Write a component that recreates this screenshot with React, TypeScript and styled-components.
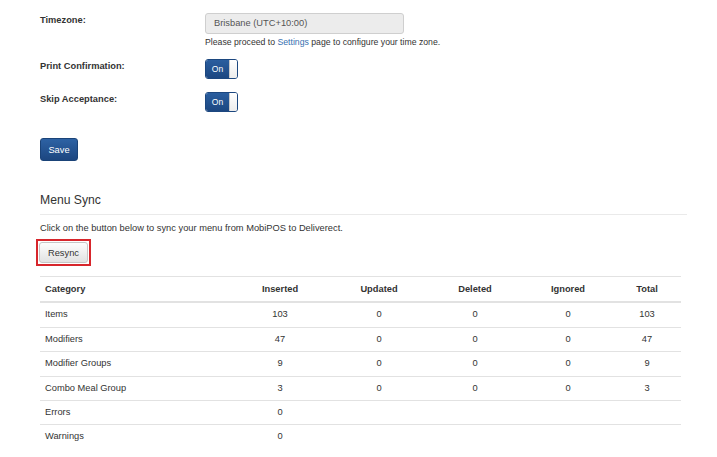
import React from "react";
import styled, { createGlobalStyle } from "styled-components";

const GlobalStyle = createGlobalStyle`
  html, body { margin: 0; padding: 0; background: #fff; }
  body {
    font-family: "Liberation Sans", Arial, Helvetica, sans-serif;
    font-size: 9.3px;
    line-height: 11.4px;
    color: #333;
  }
  * { box-sizing: border-box; }
`;

const Page = styled.div`
  width: 717px;
  padding: 13px 30px 0 40px;
`;

const FormRow = styled.div<{ $mt?: number }>`
  display: grid;
  grid-template-columns: 165px 1fr;
  align-items: start;
  margin-top: ${(p) => p.$mt ?? 0}px;
`;

const Label = styled.div<{ $pt: number }>`
  font-weight: bold;
  padding-top: ${(p) => p.$pt}px;
`;

const Control = styled.div`
  display: flex;
  flex-direction: column;
  align-items: flex-start;
`;

const ReadonlyInput = styled.div`
  width: 199px;
  height: 21px;
  background: #ececec;
  border: 1px solid #cfcfcf;
  border-radius: 3px;
  color: #555;
  padding: 0 8px;
  display: flex;
  align-items: center;
`;

const Help = styled.div`
  margin-top: 2.5px;
  color: #333;
  font-size: 8.7px;
`;

const Link = styled.a`
  color: #3570b0;
  text-decoration: none;
`;

const Toggle = styled.div`
  display: flex;
  width: 33px;
  height: 20px;
  border-radius: 3px;
  overflow: hidden;
  border: 1px solid #1c477f;
`;

const ToggleOn = styled.div`
  flex: 1;
  background: linear-gradient(#2a5e9f, #1c4781);
  color: #fff;
  display: flex;
  align-items: center;
  justify-content: center;
  font-size: 8.5px;
`;

const ToggleKnob = styled.div`
  width: 8px;
  background: linear-gradient(#ffffff, #ececec);
  border-left: 1px solid #c9c9c9;
`;

const SaveButton = styled.button`
  margin-top: 26px;
  width: 38px;
  height: 23px;
  border-radius: 3px;
  border: 1px solid #1a4378;
  background: linear-gradient(#2d62a4, #1c4680);
  color: #fff;
  font-family: inherit;
  font-size: 9.3px;
  padding: 0;
  display: block;
`;

const SectionTitle = styled.h2`
  margin: 32px 0 0;
  width: 647px;
  font-weight: normal;
  font-size: 12.2px;
  line-height: 14px;
  color: #333;
  padding-bottom: 7px;
  border-bottom: 1px solid #eaeaea;
`;

const Intro = styled.p`
  margin: 8px 0 0;
`;

const Highlight = styled.span`
  display: inline-block;
  margin: 4.5px 0 0 -4px;
  border: 2px solid #d7262c;
  padding: 1px;
`;

const GreyButton = styled.button`
  display: block;
  width: 49px;
  height: 21px;
  padding: 0;
  border-radius: 3px;
  border: 1px solid #c6c6c6;
  background: linear-gradient(#fdfdfd, #e2e2e2);
  color: #333;
  font-family: inherit;
  font-size: 9.3px;
`;

const Table = styled.table`
  margin-top: 10px;
  width: 641px;
  border-collapse: collapse;
  table-layout: fixed;
`;

const Th = styled.th<{ $left?: boolean }>`
  font-weight: bold;
  text-align: ${(p) => (p.$left ? "left" : "center")};
  padding: 6.3px 5px;
  border-top: 1px solid #e2e2e2;
  border-bottom: 2px solid #e2e2e2;
`;

const Td = styled.td<{ $left?: boolean }>`
  text-align: ${(p) => (p.$left ? "left" : "center")};
  padding: 6px 5px;
  border-top: 1px solid #e2e2e2;
`;

const columns = [
  { name: "Category", width: 189 },
  { name: "Inserted", width: 102 },
  { name: "Updated", width: 96 },
  { name: "Deleted", width: 96 },
  { name: "Ignored", width: 90 },
  { name: "Total", width: 68 },
];

const rows: (string | number)[][] = [
  ["Items", 103, 0, 0, 0, 103],
  ["Modifiers", 47, 0, 0, 0, 47],
  ["Modifier Groups", 9, 0, 0, 0, 9],
  ["Combo Meal Group", 3, 0, 0, 0, 3],
  ["Errors", 0, "", "", "", ""],
  ["Warnings", 0, "", "", "", ""],
];

const SwitchOn = () => (
  <Toggle>
    <ToggleOn>On</ToggleOn>
    <ToggleKnob />
  </Toggle>
);

export default function App() {
  return (
    <>
      <GlobalStyle />
      <Page>
        <FormRow>
          <Label $pt={1.5}>Timezone:</Label>
          <Control>
            <ReadonlyInput>Brisbane (UTC+10:00)</ReadonlyInput>
            <Help>
              Please proceed to <Link href="#">Settings</Link> page to configure your time zone.
            </Help>
          </Control>
        </FormRow>
        <FormRow $mt={11.5}>
          <Label $pt={1.5}>Print Confirmation:</Label>
          <Control>
            <SwitchOn />
          </Control>
        </FormRow>
        <FormRow $mt={13}>
          <Label $pt={1.5}>Skip Acceptance:</Label>
          <Control>
            <SwitchOn />
          </Control>
        </FormRow>
        <SaveButton>Save</SaveButton>

        <SectionTitle>Menu Sync</SectionTitle>
        <Intro>Click on the button below to sync your menu from MobiPOS to Deliverect.</Intro>
        <Highlight>
          <GreyButton>Resync</GreyButton>
        </Highlight>

        <Table>
          <colgroup>
            {columns.map((c) => (
              <col key={c.name} style={{ width: c.width }} />
            ))}
          </colgroup>
          <thead>
            <tr>
              {columns.map((c, i) => (
                <Th key={c.name} $left={i === 0}>
                  {c.name}
                </Th>
              ))}
            </tr>
          </thead>
          <tbody>
            {rows.map((r) => (
              <tr key={String(r[0])}>
                {r.map((v, i) => (
                  <Td key={i} $left={i === 0}>
                    {v}
                  </Td>
                ))}
              </tr>
            ))}
          </tbody>
        </Table>
      </Page>
    </>
  );
}
